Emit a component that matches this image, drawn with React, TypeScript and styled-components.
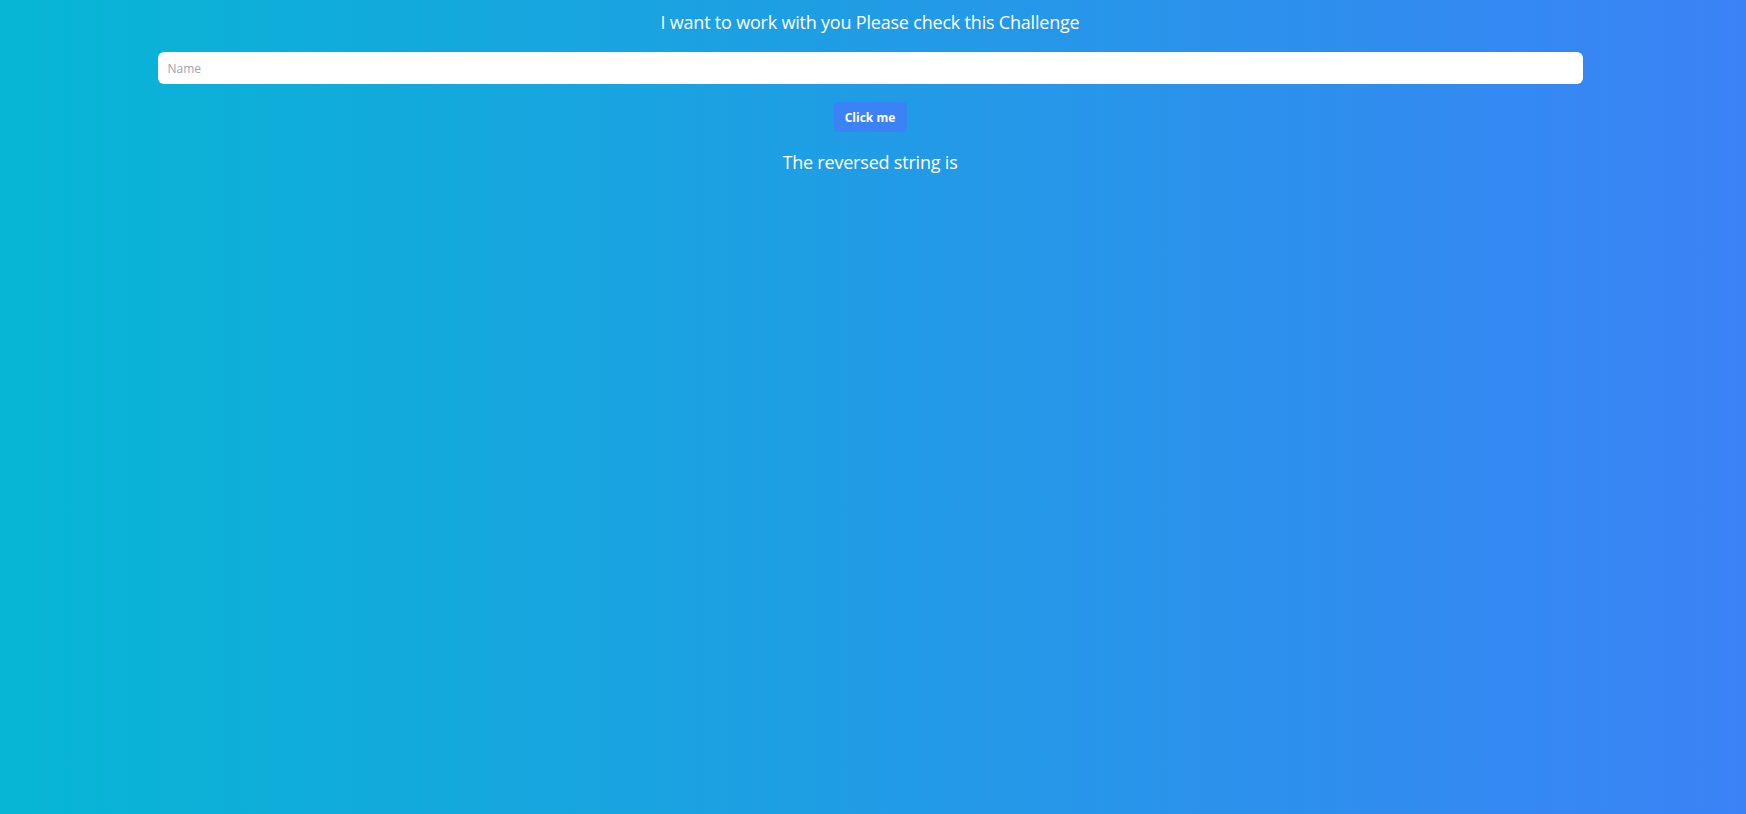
import React, { useState } from "react";
import styled, { createGlobalStyle } from "styled-components";

const Global = createGlobalStyle`
  html, body { margin: 0; padding: 0; }
  body {
    font-family: "Open Sans", "Noto Sans", sans-serif;
    min-height: 814px;
    background: linear-gradient(to right, #06b6d4, #3b82f6);
  }
`;

const Page = styled.main`
  box-sizing: border-box;
  min-height: 814px;
  padding-right: 6px;
  display: flex;
  flex-direction: column;
  align-items: center;
  color: #ffffff;
`;

const Title = styled.h1`
  margin: 9px 0 0;
  font-size: 18px;
  font-weight: 400;
  line-height: 26px;
  letter-spacing: -0.2px;
`;

const Field = styled.input`
  box-sizing: border-box;
  margin: 17px 0 0;
  width: 1425px;
  height: 32px;
  border: none;
  border-radius: 6px;
  padding: 0 10px;
  font-family: inherit;
  font-size: 12px;
  background: #ffffff;
  outline: none;
  &::placeholder { color: #9ca3af; }
`;

const Button = styled.button`
  margin-top: 18px;
  width: 73px;
  height: 30px;
  border: none;
  border-radius: 4px;
  background: #3b82f6;
  color: #ffffff;
  font-family: inherit;
  font-size: 12px;
  font-weight: 700;
  cursor: pointer;
`;

const Result = styled.p`
  margin: 16px 0 0;
  font-size: 18px;
  line-height: 28px;
  letter-spacing: -0.2px;
`;

export default function App() {
  const [name, setName] = useState("");
  const [rev, setRev] = useState("");
  return (
    <>
      <Global />
      <Page>
        <Title>I want to work with you Please check this Challenge</Title>
        <Field placeholder="Name" value={name} onChange={(e) => setName(e.target.value)} />
        <Button onClick={() => setRev(name.split("").reverse().join(""))}>Click me</Button>
        <Result>The reversed string is {rev}</Result>
      </Page>
    </>
  );
}
